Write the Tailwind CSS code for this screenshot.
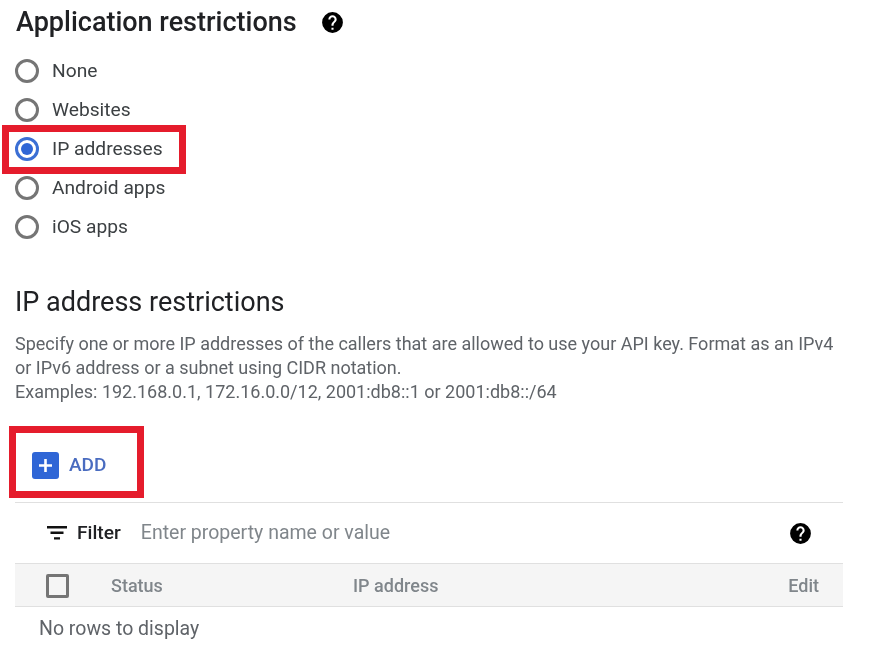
<!DOCTYPE html>
<html lang="en">
<head>
  <meta charset="UTF-8">
  <meta name="viewport" content="width=device-width, initial-scale=1.0">
  <title>Application restrictions</title>
  <script src="https://cdn.jsdelivr.net/npm/@tailwindcss/browser@4"></script>
</head>
<body class="bg-white text-[#202124] font-['Roboto',sans-serif] overflow-hidden">
  <div class="relative w-[878px] h-[649px] overflow-hidden blur-[0.4px]">

    <!-- Application restrictions -->
    <div class="pl-[16px] h-[45px] flex items-center">
      <h2 class="text-[27px] font-medium leading-[45px]">Application restrictions</h2>
      <svg class="ml-[23px] mb-[1px] w-[25px] h-[25px]" viewBox="0 0 24 24"><path fill="#000" d="M12 2a10 10 0 1 0 0 20 10 10 0 0 0 0-20zm1 17h-2v-2h2v2zm2.07-7.75-.9.92C13.45 12.9 13 13.5 13 15h-2v-.5c0-1.1.45-2.1 1.17-2.83l1.24-1.26c.37-.36.59-.86.59-1.41 0-1.1-.9-2-2-2s-2 .9-2 2H8c0-2.21 1.79-4 4-4s4 1.79 4 4c0 .88-.36 1.68-.93 2.25z"/></svg>
    </div>

    <div class="pl-[15px] pt-[6px] flex flex-col">
      <label class="h-[39px] flex items-center gap-[13px] text-[19.2px] text-[#3c4043]">
        <span class="w-[24px] h-[24px] rounded-full border-[3px] border-[#757575]"></span><span class="pt-[1px]">None</span>
      </label>
      <label class="h-[39px] flex items-center gap-[13px] text-[19.2px] text-[#3c4043]">
        <span class="w-[24px] h-[24px] rounded-full border-[3px] border-[#757575]"></span><span class="pt-[1px]">Websites</span>
      </label>
      <label class="h-[39px] flex items-center gap-[13px] text-[19.2px] text-[#3c4043]">
        <span class="w-[24px] h-[24px] rounded-full border-[3px] border-[#3b6fd4] flex items-center justify-center"><span class="w-[12px] h-[12px] rounded-full bg-[#2f66d6]"></span></span><span class="pt-[1px]">IP addresses</span>
      </label>
      <label class="h-[39px] flex items-center gap-[13px] text-[19.2px] text-[#3c4043]">
        <span class="w-[24px] h-[24px] rounded-full border-[3px] border-[#757575]"></span><span class="pt-[1px]">Android apps</span>
      </label>
      <label class="h-[39px] flex items-center gap-[13px] text-[19.2px] text-[#3c4043]">
        <span class="w-[24px] h-[24px] rounded-full border-[3px] border-[#757575]"></span><span class="pt-[1px]">iOS apps</span>
      </label>
    </div>

    <!-- IP address restrictions -->
    <div class="pl-[15px] pt-[36px]">
      <h2 class="text-[27px] font-normal leading-[40px] text-[#202124]">IP address restrictions</h2>
      <p class="mt-[10px] w-[830px] text-[18px] leading-[24px] text-[#5f6368]">Specify one or more IP addresses of the callers that are allowed to use your API key. Format as an IPv4 or IPv6 address or a subnet using CIDR notation.<br>Examples: 192.168.0.1, 172.16.0.0/12, 2001:db8::1 or 2001:db8::/64</p>
    </div>

    <!-- Add button -->
    <div class="ml-[32px] mt-[48px] h-[27px] flex items-center gap-[10px]">
      <span class="w-[27px] h-[27px] rounded-[3px] bg-[#2f66d6] flex items-center justify-center">
        <svg class="w-[17px] h-[17px]" viewBox="0 0 17 17"><path fill="none" stroke="#fff" stroke-width="2.6" d="M8.5 2v13M2 8.5h13"/></svg>
      </span>
      <span class="text-[19px] font-medium text-[#4a6cc0]">ADD</span>
    </div>

    <!-- Table -->
    <div class="ml-[15px] mt-[23px] w-[828px] border-t-[1.5px] border-[#e0e0e0]">
      <div class="h-[60px] flex items-center pl-[32px] pr-[30px]">
        <svg class="w-[20px] h-[14px]" viewBox="0 0 20 14"><path fill="#111" d="M0 0h20v2.4H0zM3.5 5.6h13V8h-13zM7 11.2h6v2.4H7z"/></svg>
        <span class="ml-[10px] text-[19.2px] font-medium text-[#202124]">Filter</span>
        <span class="ml-[20px] text-[19.5px] text-[#80868b]">Enter property name or value</span>
        <svg class="ml-auto w-[25px] h-[25px]" viewBox="0 0 24 24"><path fill="#000" d="M12 2a10 10 0 1 0 0 20 10 10 0 0 0 0-20zm1 17h-2v-2h2v2zm2.07-7.75-.9.92C13.45 12.9 13 13.5 13 15h-2v-.5c0-1.1.45-2.1 1.17-2.83l1.24-1.26c.37-.36.59-.86.59-1.41 0-1.1-.9-2-2-2s-2 .9-2 2H8c0-2.21 1.79-4 4-4s4 1.79 4 4c0 .88-.36 1.68-.93 2.25z"/></svg>
      </div>
      <div class="h-[44px] flex items-center bg-[#f5f5f5] border-y-[1.5px] border-[#e0e0e0] text-[18px] font-medium text-[#80868b] pr-[24px]">
        <span class="ml-[31px] mt-[2px] w-[23px] h-[24px] rounded-[2px] border-[3px] border-[#757575]"></span>
        <span class="ml-[42px] w-[242px]">Status</span>
        <span>IP address</span>
        <span class="ml-auto">Edit</span>
      </div>
      <div class="pl-[24px] pt-[9px] text-[19.5px] leading-[26px] text-[#5f6368]">No rows to display</div>
    </div>

    <!-- Red highlight boxes -->
    <div class="absolute left-[2px] top-[125px] w-[184px] h-[49px] border-[7px] border-[#e51c2c]"></div>
    <div class="absolute left-[9px] top-[426px] w-[135px] h-[72px] border-[7px] border-[#e51c2c]"></div>
  </div>
</body>
</html>
